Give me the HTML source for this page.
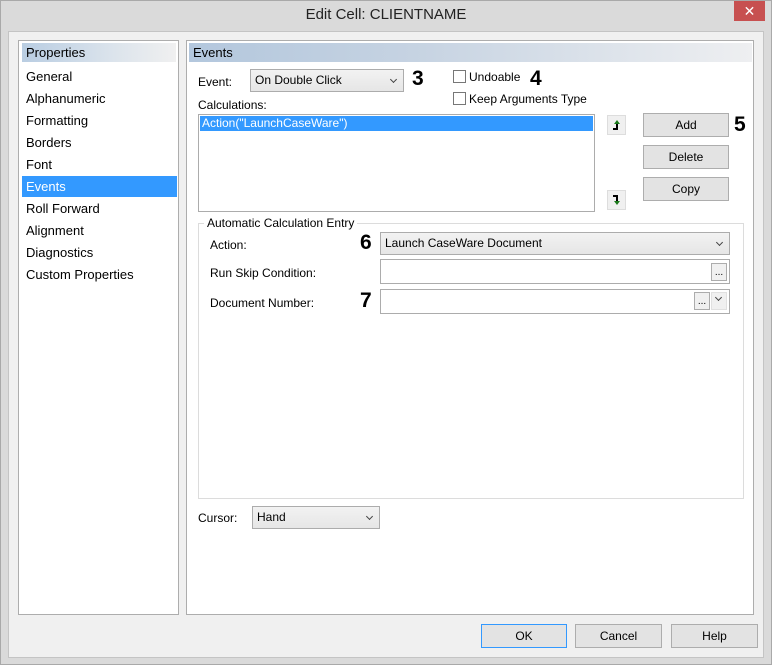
<!DOCTYPE html>
<html><head><style>
*{box-sizing:border-box;margin:0;padding:0}
body{width:772px;height:665px;background:#dadada;font-family:"Liberation Sans",sans-serif;position:relative;overflow:hidden;color:#000}
.a{position:absolute}
.win{left:0;top:0;width:772px;height:665px;border:1px solid #a9a9a9;background:#dadada}
.client{left:8px;top:31px;width:756px;height:627px;background:#f0f0f0;border:1px solid #c4c4c4}
.panel{background:#fff;border:1px solid #adadad}
.hdr{height:19px;font-size:13px;padding:2px 4px;background:linear-gradient(to right,#b9cde2,#dce4ec 60%,#f0f0f0)}
.li{font-size:13px;left:26px}
.lbl{font-size:12px}
.btn{background:#e3e3e3;border:1px solid #adadad;font-size:12px;text-align:center;line-height:22px}
.sel{background:linear-gradient(#f2f2f2,#e6e6e6);border:1px solid #acacac;font-size:12px;padding:0 4px;line-height:21px}
.sel:after{content:"";position:absolute;right:7px;top:7px;width:4px;height:4px;border-right:1.5px solid #444;border-bottom:1.5px solid #444;transform:rotate(45deg)}
.inp{background:#fff;border:1px solid #acacac}
.num{font-size:21px;font-weight:bold}
.cb{width:13px;height:13px;border:1px solid #777;background:#fff}
.dots{width:16px;height:18px;border:1px solid #acacac;background:#f0f0f0;font-size:10px;text-align:center;line-height:18px}
.arr{width:19px;height:20px;background:#f0f0f0;border:1px solid #ddd}
</style></head><body>
<div class="a win"></div>
<div class="a" style="left:0;top:6px;width:772px;text-align:center;font-size:15px;color:#222">Edit Cell: CLIENTNAME</div>
<div class="a" style="left:734px;top:1px;width:31px;height:20px;background:#c75050;color:#fff;text-align:center;font-size:14px;line-height:20px">✕</div>
<div class="a client"></div>
<div class="a panel" style="left:18px;top:40px;width:161px;height:575px"></div>
<div class="a hdr" style="left:22px;top:43px;width:154px">Properties</div>
<div class="a li" style="top:69px">General</div>
<div class="a li" style="top:91px">Alphanumeric</div>
<div class="a li" style="top:113px">Formatting</div>
<div class="a li" style="top:135px">Borders</div>
<div class="a li" style="top:157px">Font</div>
<div class="a" style="left:22px;top:176px;width:155px;height:21px;background:#3399ff"></div>
<div class="a li" style="top:179px;color:#fff">Events</div>
<div class="a li" style="top:201px">Roll Forward</div>
<div class="a li" style="top:223px">Alignment</div>
<div class="a li" style="top:245px">Diagnostics</div>
<div class="a li" style="top:267px">Custom Properties</div>

<div class="a panel" style="left:186px;top:40px;width:568px;height:575px"></div>
<div class="a hdr" style="left:189px;top:43px;width:563px;background:linear-gradient(to right,#b3c7dd,#c6d3e2 40%,#eeeff1)">Events</div>
<div class="a lbl" style="left:198px;top:75px">Event:</div>
<div class="a sel" style="left:250px;top:69px;width:154px;height:23px">On Double Click</div>
<div class="a num" style="left:412px;top:67px">3</div>
<div class="a cb" style="left:453px;top:70px"></div>
<div class="a lbl" style="left:469px;top:70px">Undoable</div>
<div class="a num" style="left:530px;top:67px">4</div>
<div class="a cb" style="left:453px;top:92px"></div>
<div class="a lbl" style="left:469px;top:92px">Keep Arguments Type</div>
<div class="a lbl" style="left:198px;top:98px">Calculations:</div>
<div class="a inp" style="left:198px;top:114px;width:397px;height:98px"></div>
<div class="a" style="left:200px;top:116px;width:393px;height:15px;background:#3399ff;color:#fff;font-size:12px;padding-left:2px;line-height:15px">Action("LaunchCaseWare")</div>
<div class="a arr" style="left:607px;top:115px"><svg width="17" height="18"><path d="M5 13h4V7" stroke="#000" stroke-width="2" fill="none"/><path d="M6 8l3-4 3 4z" fill="#1a7a1a"/></svg></div>
<div class="a arr" style="left:607px;top:190px"><svg width="17" height="18"><path d="M5 5h4v6" stroke="#000" stroke-width="2" fill="none"/><path d="M6 10l3 4 3-4z" fill="#1a7a1a"/></svg></div>
<div class="a btn" style="left:643px;top:113px;width:86px;height:24px">Add</div>
<div class="a num" style="left:734px;top:113px">5</div>
<div class="a btn" style="left:643px;top:145px;width:86px;height:24px">Delete</div>
<div class="a btn" style="left:643px;top:177px;width:86px;height:24px">Copy</div>

<div class="a" style="left:198px;top:223px;width:546px;height:276px;border:1px solid #dcdcdc"></div>
<div class="a lbl" style="left:204px;top:216px;background:#fff;padding:0 3px">Automatic Calculation Entry</div>
<div class="a lbl" style="left:210px;top:238px">Action:</div>
<div class="a num" style="left:360px;top:231px">6</div>
<div class="a sel" style="left:380px;top:232px;width:350px;height:23px">Launch CaseWare Document</div>
<div class="a lbl" style="left:210px;top:266px">Run Skip Condition:</div>
<div class="a inp" style="left:380px;top:259px;width:350px;height:25px"></div>
<div class="a dots" style="left:711px;top:263px">...</div>
<div class="a lbl" style="left:210px;top:296px">Document Number:</div>
<div class="a num" style="left:360px;top:289px">7</div>
<div class="a inp" style="left:380px;top:289px;width:350px;height:25px"></div>
<div class="a dots" style="left:694px;top:292px">...</div>
<div class="a" style="left:711px;top:292px;width:16px;height:18px;background:#f0f0f0;border:1px solid #e0e0e0"></div>
<div class="a" style="left:716px;top:295px;width:5px;height:5px;border-right:1.5px solid #444;border-bottom:1.5px solid #444;transform:rotate(45deg)"></div>

<div class="a lbl" style="left:198px;top:511px">Cursor:</div>
<div class="a sel" style="left:252px;top:506px;width:128px;height:23px">Hand</div>

<div class="a btn" style="left:481px;top:624px;width:86px;height:24px;border-color:#3399ff">OK</div>
<div class="a btn" style="left:575px;top:624px;width:87px;height:24px">Cancel</div>
<div class="a btn" style="left:671px;top:624px;width:87px;height:24px">Help</div>
</body></html>
